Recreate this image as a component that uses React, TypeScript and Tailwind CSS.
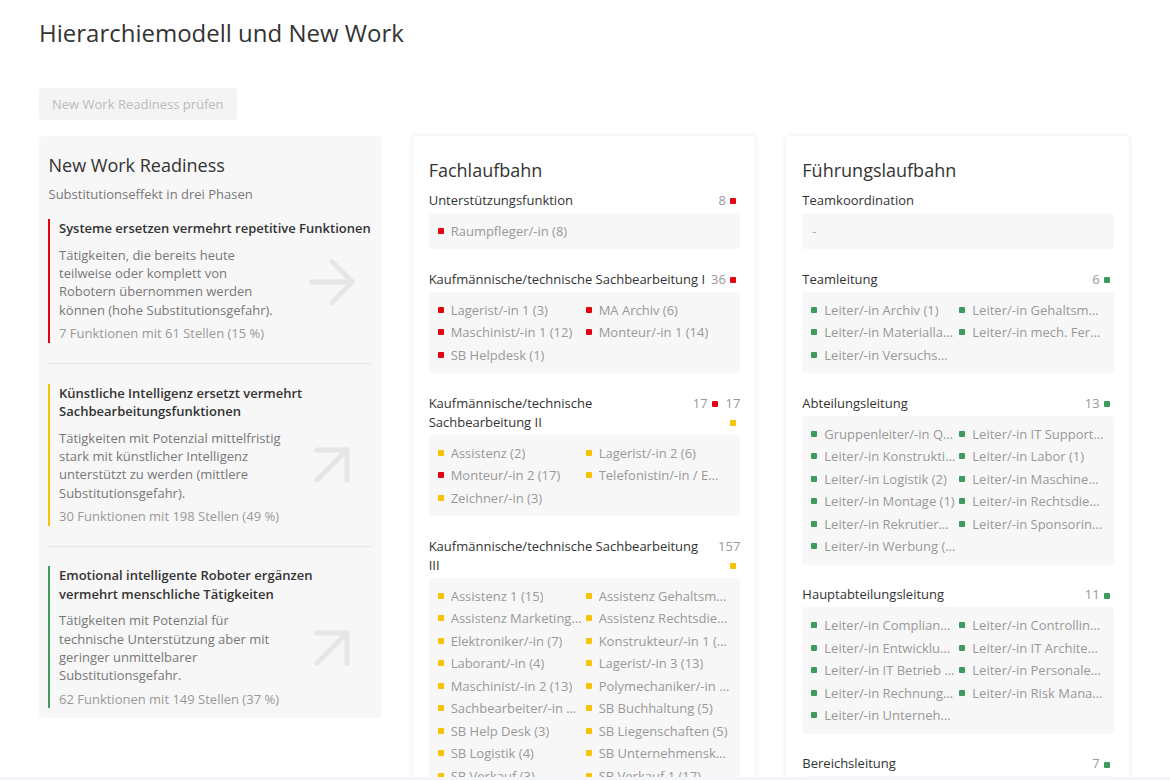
import React from "react";
import { ArrowRight, ArrowUpRight } from "lucide-react";

type C = "r" | "y" | "g";
const dot: Record<C, string> = {
  r: "bg-[#e3000f]",
  y: "bg-[#f7c200]",
  g: "bg-[#3f9a5e]",
};

type Item = [string, C];
type Group = { title: string; counts?: [number, C][]; items: Item[] };

const fach: Group[] = [
  { title: "Unterstützungsfunktion", counts: [[8, "r"]], items: [["Raumpfleger/-in (8)", "r"]] },
  {
    title: "Kaufmännische/technische Sachbearbeitung I",
    counts: [[36, "r"]],
    items: [
      ["Lagerist/-in 1 (3)", "r"],
      ["MA Archiv (6)", "r"],
      ["Maschinist/-in 1 (12)", "r"],
      ["Monteur/-in 1 (14)", "r"],
      ["SB Helpdesk (1)", "r"],
    ],
  },
  {
    title: "Kaufmännische/technische Sachbearbeitung II",
    counts: [
      [17, "r"],
      [17, "y"],
    ],
    items: [
      ["Assistenz (2)", "y"],
      ["Lagerist/-in 2 (6)", "y"],
      ["Monteur/-in 2 (17)", "r"],
      ["Telefonistin/-in / E…", "y"],
      ["Zeichner/-in (3)", "y"],
    ],
  },
  {
    title: "Kaufmännische/technische Sachbearbeitung III",
    counts: [[157, "y"]],
    items: [
      ["Assistenz 1 (15)", "y"],
      ["Assistenz Gehaltsm…", "y"],
      ["Assistenz Marketing…", "y"],
      ["Assistenz Rechtsdie…", "y"],
      ["Elektroniker/-in (7)", "y"],
      ["Konstrukteur/-in 1 (…", "y"],
      ["Laborant/-in (4)", "y"],
      ["Lagerist/-in 3 (13)", "y"],
      ["Maschinist/-in 2 (13)", "y"],
      ["Polymechaniker/-in …", "y"],
      ["Sachbearbeiter/-in …", "y"],
      ["SB Buchhaltung (5)", "y"],
      ["SB Help Desk (3)", "y"],
      ["SB Liegenschaften (5)", "y"],
      ["SB Logistik (4)", "y"],
      ["SB Unternehmensk…", "y"],
      ["SB Verkauf (3)", "y"],
      ["SB Verkauf 1 (17)", "y"],
      ["Techniker/-in (9)", "y"],
      ["Zeichner/-in 2 (6)", "y"],
    ],
  },
];

const fuehr: Group[] = [
  { title: "Teamkoordination", items: [] },
  {
    title: "Teamleitung",
    counts: [[6, "g"]],
    items: [
      ["Leiter/-in Archiv (1)", "g"],
      ["Leiter/-in Gehaltsm…", "g"],
      ["Leiter/-in Materialla…", "g"],
      ["Leiter/-in mech. Fer…", "g"],
      ["Leiter/-in Versuchs…", "g"],
    ],
  },
  {
    title: "Abteilungsleitung",
    counts: [[13, "g"]],
    items: [
      ["Gruppenleiter/-in Q…", "g"],
      ["Leiter/-in IT Support…", "g"],
      ["Leiter/-in Konstrukti…", "g"],
      ["Leiter/-in Labor (1)", "g"],
      ["Leiter/-in Logistik (2)", "g"],
      ["Leiter/-in Maschine…", "g"],
      ["Leiter/-in Montage (1)", "g"],
      ["Leiter/-in Rechtsdie…", "g"],
      ["Leiter/-in Rekrutier…", "g"],
      ["Leiter/-in Sponsorin…", "g"],
      ["Leiter/-in Werbung (…", "g"],
    ],
  },
  {
    title: "Hauptabteilungsleitung",
    counts: [[11, "g"]],
    items: [
      ["Leiter/-in Complian…", "g"],
      ["Leiter/-in Controllin…", "g"],
      ["Leiter/-in Entwicklu…", "g"],
      ["Leiter/-in IT Archite…", "g"],
      ["Leiter/-in IT Betrieb …", "g"],
      ["Leiter/-in Personale…", "g"],
      ["Leiter/-in Rechnung…", "g"],
      ["Leiter/-in Risk Mana…", "g"],
      ["Leiter/-in Unterneh…", "g"],
    ],
  },
  {
    title: "Bereichsleitung",
    counts: [[7, "g"]],
    items: [
      ["Bereichsleiter/-in F…", "g"],
      ["Bereichsleiter/-in P…", "g"],
      ["Bereichsleiter/-in V…", "g"],
    ],
  },
];

const phases = [
  {
    border: "border-[#e3000f]",
    title: "Systeme ersetzen vermehrt repetitive Funktionen",
    desc: "Tätigkeiten, die bereits heute teilweise oder komplett von Robotern übernommen werden können (hohe Substitutionsgefahr).",
    stats: "7 Funktionen mit 61 Stellen (15 %)",
    right: true,
  },
  {
    border: "border-[#f7c200]",
    title: "Künstliche Intelligenz ersetzt vermehrt Sachbearbeitungsfunktionen",
    desc: "Tätigkeiten mit Potenzial mittelfristig stark mit künstlicher Intelligenz unterstützt zu werden (mittlere Substitutionsgefahr).",
    stats: "30 Funktionen mit 198 Stellen (49 %)",
    right: false,
  },
  {
    border: "border-[#3f9a5e]",
    title: "Emotional intelligente Roboter ergänzen vermehrt menschliche Tätigkeiten",
    desc: "Tätigkeiten mit Potenzial für technische Unterstützung aber mit geringer unmittelbarer Substitutionsgefahr.",
    stats: "62 Funktionen mit 149 Stellen (37 %)",
    right: false,
  },
];

function GroupBlock({ g, first }: { g: Group; first: boolean }) {
  return (
    <div className={first ? "" : "mt-[20.5px]"}>
      <div className="flex justify-between gap-1 text-[13px] leading-[19px]">
        <div className="text-[#333]">{g.title}</div>
        {g.counts && (
          <div className="text-right text-[#999]">
            {g.counts.map((c, i) => (
              <React.Fragment key={i}>
                {i > 0 ? " " : ""}
                {c[0]}{" "}
                <span className={`ml-[1px] mr-[4px] inline-block h-[6px] w-[6px] rounded-[1px] align-middle ${dot[c[1]]}`} />
              </React.Fragment>
            ))}
          </div>
        )}
      </div>
      <div className="mt-[3px] rounded-[4px] bg-[#f7f7f7] py-[7px] pl-[9px] pr-[8px]">
        {g.items.length === 0 ? (
          <div className="h-[22.5px] pl-px text-[13px] leading-[22.5px] text-[#aaa]">-</div>
        ) : (
          <div className="grid grid-cols-[148px_1fr]">
            {g.items.map((it, i) => (
              <div key={i} className="flex h-[22.5px] min-w-0 items-center">
                <span className={`h-[6px] w-[6px] shrink-0 rounded-[1px] ${dot[it[1]]}`} />
                <span className="ml-[7px] truncate text-[13px] leading-[22.5px] text-[#999]">{it[0]}</span>
              </div>
            ))}
          </div>
        )}
      </div>
    </div>
  );
}

function Card({ title, groups }: { title: string; groups: Group[] }) {
  return (
    <div className="rounded-[4px] bg-white pb-6 pl-4 pr-[15px] pt-[21px] shadow-[0_0_6px_rgba(0,0,0,0.09)]">
      <h2 className="text-[18px] leading-[26px] text-[#333]">{title}</h2>
      <div className="mt-[7.5px]">
        {groups.map((g, i) => (
          <GroupBlock key={i} g={g} first={i === 0} />
        ))}
      </div>
    </div>
  );
}

export default function App() {
  return (
    <div className="flex h-[780px] w-full flex-col overflow-hidden bg-white font-['Open_Sans',sans-serif]">
      <div className="min-h-0 flex-1 overflow-hidden pl-[39px] pr-[41px] pt-[17px]">
        <h1 className="text-[24px] font-normal leading-[32px] text-[#333]">Hierarchiemodell und New Work</h1>
        <button className="mt-[39px] h-[32px] rounded-[3px] bg-[#f4f4f4] px-[13px] pt-px text-[13px] text-[#bbb]">
          New Work Readiness prüfen
        </button>
        <div className="mt-[16px] grid grid-cols-3 items-start gap-[31px]">
          <div className="rounded-[4px] bg-[#f7f7f7] pb-[10px] pl-[9px] pr-[10px] pt-[16px]">
            <h2 className="pl-[0.5px] text-[18px] leading-[26px] text-[#333]">New Work Readiness</h2>
            <p className="mt-[6.5px] pl-[0.5px] text-[13px] leading-[19px] text-[#777]">Substitutionseffekt in drei Phasen</p>
            <div className="mt-[15.5px]">
              {phases.map((p, i) => (
                <div
                  key={i}
                  className={
                    i === 0
                      ? "border-b border-[#e8e8e8] pb-[20px]"
                      : i === phases.length - 1
                        ? "pt-[19.5px]"
                        : "border-b border-[#e8e8e8] py-[20px]"
                  }
                >
                  <div className={`border-l-2 pl-[9px] ${p.border}`}>
                    <div className="text-[13px] font-semibold leading-[18.5px] text-[#333]">{p.title}</div>
                    <div className="mt-[8px] flex">
                      <div className="w-[228px] shrink-0 text-[13px] leading-[18.4px] text-[#777]">{p.desc}</div>
                      <div className="flex flex-1 items-center justify-center pl-[6px] text-[#e6e6e6]">
                        {p.right ? (
                          <ArrowRight size={70} strokeWidth={1.7} />
                        ) : (
                          <ArrowUpRight size={72} strokeWidth={1.7} />
                        )}
                      </div>
                    </div>
                    <div className="mt-[5px] text-[13px] leading-[18.5px] text-[#999]">{p.stats}</div>
                  </div>
                </div>
              ))}
            </div>
          </div>
          <Card title="Fachlaufbahn" groups={fach} />
          <Card title="Führungslaufbahn" groups={fuehr} />
        </div>
      </div>
      <div className="h-[3px] shrink-0 bg-[#f4f5f9]" />
    </div>
  );
}
